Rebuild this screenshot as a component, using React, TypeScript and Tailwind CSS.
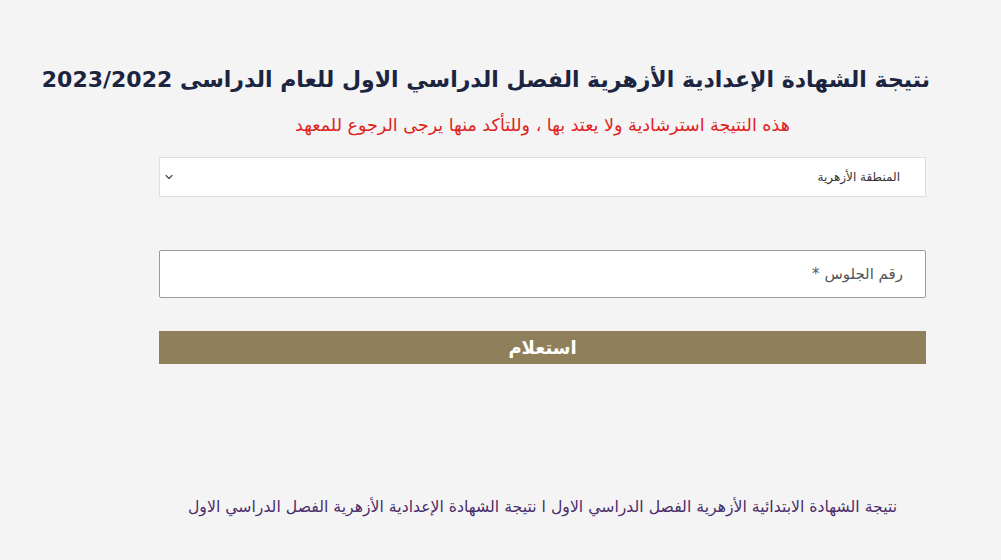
import { ChevronDown } from 'lucide-react';

const FONT = "font-['DejaVu_Sans','Noto_Sans',sans-serif]";

export default function App() {
  return (
    <div dir="rtl" className={`min-h-[560px] w-full bg-[#f4f4f4] ${FONT}`}>
      <div className="pt-[62px] pr-[71px]">
        <h1 className="whitespace-nowrap text-right text-[22px] font-bold leading-[36px] text-[#1b2541]">
          نتيجة الشهادة الإعدادية الأزهرية الفصل الدراسي الاول للعام الدراسى 2023/2022
        </h1>
      </div>

      <div className="mr-[75px] w-[767px]">
        <p className="mt-[16px] text-center text-[17.5px] leading-[22px] text-[#e0221c]">
          هذه النتيجة استرشادية ولا يعتد بها ، وللتأكد منها يرجى الرجوع للمعهد
        </p>

        <div className="mt-[21px] flex h-[40px] items-center justify-between border border-[#dedede] bg-white pr-[25px] pl-[3px] text-[12px] text-[#333]">
          <span>المنطقة الأزهرية</span>
          <ChevronDown className="h-[12px] w-[12px] text-[#444]" strokeWidth={2.2} />
        </div>

        <div className="mt-[53px] flex h-[48px] items-center rounded-[2px] border border-[#9a9a9a] bg-white pr-[22px] text-[15px] text-[#555]">
          رقم الجلوس *
        </div>

        <button className="mt-[33px] flex h-[33px] w-full items-center justify-center bg-[#8f805b] text-[18px] font-bold text-white">
          استعلام
        </button>

        <p className="mt-[132px] text-center text-[15.7px] leading-[22px] text-[#4a2d6b]">
          نتيجة الشهادة الابتدائية الأزهرية الفصل الدراسي الاول ا نتيجة الشهادة الإعدادية الأزهرية الفصل الدراسي الاول
        </p>
      </div>
    </div>
  );
}
